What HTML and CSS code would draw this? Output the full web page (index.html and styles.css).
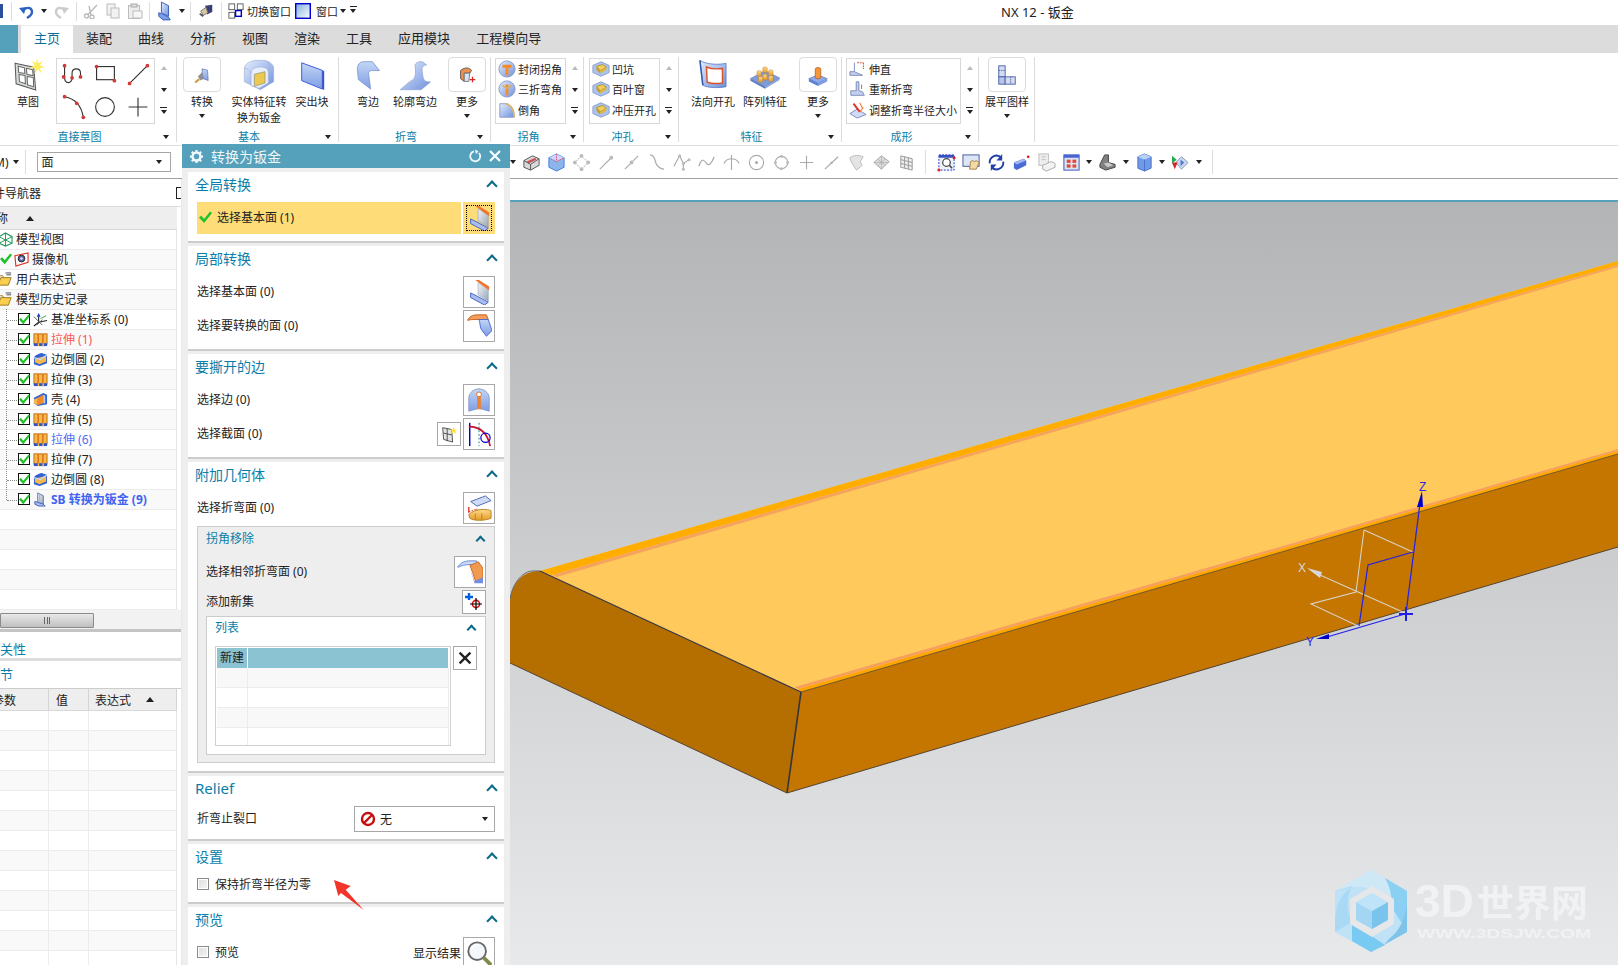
FILE: index.html
```html
<!DOCTYPE html>
<html lang="zh-CN">
<head>
<meta charset="utf-8">
<title>NX 12 - 钣金</title>
<link rel="stylesheet" href="styles.css">
</head>
<body>
<svg class="defs" xmlns="http://www.w3.org/2000/svg">
<defs>
<linearGradient id="gb" x1="0" y1="0" x2="1" y2="1"><stop offset="0" stop-color="#e4edfc"/><stop offset="1" stop-color="#6f90de"/></linearGradient>
<linearGradient id="gv" x1="0" y1="0" x2="0" y2="1"><stop offset="0" stop-color="#c2d6f6"/><stop offset="1" stop-color="#7e9de4"/></linearGradient>
<linearGradient id="gg" x1="0" y1="0" x2="1" y2="1"><stop offset="0" stop-color="#f4f6f8"/><stop offset="1" stop-color="#97a4b8"/></linearGradient>
<linearGradient id="go" x1="0" y1="0" x2="0" y2="1"><stop offset="0" stop-color="#ffd98a"/><stop offset="1" stop-color="#e59a28"/></linearGradient>
<symbol id="r-sketch" viewBox="0 0 32 32"><polygon points="3,5 21,9 23,31 4,25" fill="#d8dcd8" stroke="#5a5a5a"/><polygon points="6,8 12,9.5 12.5,15 6.5,14" fill="#fff" stroke="#666"/><polygon points="14,10 20,11.5 20.5,17 14.5,16" fill="#fff" stroke="#666"/><polygon points="6.8,16 12.6,17 13,25 7.2,23" fill="#fff" stroke="#666"/><polygon points="14.7,18 20.7,19 21,28 15,26" fill="#fff" stroke="#666"/><polygon points="24,0 25.5,5 30,3 27,7 32,9 27,10 29,15 25,11 22,15 22.5,10 17,10 22,7 19,3 23.5,5" fill="#ffec5a"/></symbol>
<symbol id="r-chain" viewBox="0 0 32 32"><path d="M7 6V18c0 8 8 8 8 1v-5c0-6 9-6 9 0v5" fill="none" stroke="#333" stroke-width="1.2"/><g fill="#d23a3a"><circle cx="7" cy="6" r="2"/><circle cx="6" cy="18" r="2"/><circle cx="15" cy="19" r="2"/><circle cx="24" cy="18" r="2"/></g></symbol>
<symbol id="r-rect" viewBox="0 0 32 32"><rect x="7" y="7" width="19" height="14" fill="none" stroke="#333" stroke-width="1.2"/><circle cx="7" cy="7" r="2" fill="#d23a3a"/><circle cx="26" cy="22" r="2" fill="#d23a3a"/></symbol>
<symbol id="r-line" viewBox="0 0 32 32"><path d="M7 25L26 6" stroke="#333" stroke-width="1.2"/><circle cx="7" cy="25" r="2" fill="#d23a3a"/><circle cx="26" cy="6" r="2" fill="#d23a3a"/></symbol>
<symbol id="r-arc" viewBox="0 0 32 32"><path d="M7 5C18 7 25 14 27 27" fill="none" stroke="#333" stroke-width="1.2"/><circle cx="7" cy="5" r="2" fill="#d23a3a"/><circle cx="20" cy="12" r="2" fill="#d23a3a"/><circle cx="27" cy="27" r="2" fill="#d23a3a"/></symbol>
<symbol id="r-circle" viewBox="0 0 32 32"><circle cx="16" cy="16" r="10" fill="none" stroke="#333" stroke-width="1.2"/></symbol>
<symbol id="r-plus" viewBox="0 0 32 32"><path d="M16 6V26M6 16H26" stroke="#333" stroke-width="1.2"/></symbol>
<symbol id="r-convert" viewBox="0 0 32 32"><polygon points="16,7 24,9 25,24 17,21" fill="url(#gv)" stroke="#5c6fae"/><polygon points="10,18 16,12 19,21 14,24" fill="#8f8f99"/><path d="M12 22L6 27" stroke="#cf9a3a" stroke-width="3"/></symbol>
<symbol id="r-solid" viewBox="0 0 48 48"><path d="M2 14C3 6 12 2 22 2H30C38 2 46 8 46 14V34L26 46 2 34Z" fill="url(#gb)" stroke="#9fb0d8"/><path d="M12 40V22C12 15 18 12 26 12 32 12 38 14 38 20V36L24 44Z" fill="#e8eefb" stroke="#9fb0d8"/><polygon points="17,23 33,19 33,36 17,41" fill="#ebc94f" stroke="#8c8c70"/><path d="M2 14C8 14 10 18 12 22M36 4C42 8 38 12 38 20" fill="none" stroke="#9fb0d8"/></symbol>
<symbol id="r-tab" viewBox="0 0 32 32"><polygon points="5,3 27,11 27,31 5,22" fill="url(#gv)" stroke="#3a55d8"/><polygon points="27,11 29,12 29,32 27,31" fill="#3550d0"/></symbol>
<symbol id="r-flange" viewBox="0 0 30 34"><path d="M3 10C3 6 5 2 10 2H20L28 12H19C16 12 15 14 16 18L18 33 4 22Z" fill="url(#gv)" stroke="#7f9ad0"/></symbol>
<symbol id="r-contour" viewBox="0 0 44 40"><path d="M16 28C22 26 24 20 22 8 22 4 28 2 32 3L37 7C33 7 31 9 31 13 33 24 31 29 42 29L30 39H3Z" fill="url(#gb)" stroke="#92a8d8"/></symbol>
<symbol id="r-morebend" viewBox="0 0 24 24"><path d="M5 7C10 3 15 4 17 7L15 10H9V19L5 16Z" fill="#ee9050" stroke="#555"/><path d="M9 10H15L14 19H9Z" fill="#d8e3f5" stroke="#777"/><path d="M15 17H21M18 14V20" stroke="#d22" stroke-width="1.4"/></symbol>
<symbol id="r-cor1" viewBox="0 0 20 20"><circle cx="10" cy="10" r="9" fill="url(#gb)" stroke="#8a9ac8"/><path d="M5 7H15M10 7V17" stroke="#f58c26" stroke-width="3.2"/></symbol>
<symbol id="r-cor2" viewBox="0 0 20 20"><circle cx="10" cy="10" r="9" fill="url(#gb)" stroke="#8a9ac8"/><path d="M10 5V17" stroke="#f58c26" stroke-width="3"/><path d="M5 6L10 9 15 6" fill="none" stroke="#d9b05c" stroke-width="1.6"/></symbol>
<symbol id="r-cor3" viewBox="0 0 20 20"><path d="M2 3H9C15 5 18 11 18 18H2Z" fill="url(#gb)" stroke="#8a9ac8"/><path d="M9 3C15 5 18 11 18 18" fill="none" stroke="#d8b46a" stroke-width="2"/></symbol>
<symbol id="r-punch" viewBox="0 0 20 20"><polygon points="10,2 19,6 19,14 10,18 1,14 1,6" fill="#a9c4ee" stroke="#8a9ac8"/><polygon points="5,7 12,5 16,8 9,12" fill="#f0cf5c" stroke="#b08e2c"/><polygon points="5,7 9,12 9,15 5,11" fill="#c99c2c"/><polygon points="9,12 16,8 16,11 9,15" fill="#e0b43f"/></symbol>
<symbol id="r-normal" viewBox="0 0 44 44"><path d="M4 2C14 8 30 8 40 6V38C30 40 14 40 8 36Z" fill="url(#gb)" stroke="#4a6fb8"/><path d="M4 2L8 36" stroke="#2f5aa8" stroke-width="2"/><path d="M13 11C20 14 28 14 35 13V33C28 34 20 34 14 32Z" fill="#fff" stroke="#d8552c" stroke-width="2"/></symbol>
<symbol id="r-pattern" viewBox="0 0 44 40"><polygon points="22,14 42,24 22,36 2,25" fill="#7f9bd8" stroke="#6a80b8"/><polygon points="2,25 22,36 22,39 2,28" fill="#5f7cc0"/><polygon points="22,36 42,24 42,27 22,39" fill="#8aa4e0"/><g fill="url(#go)" stroke="#bb7a20" stroke-width=".6"><rect x="11" y="14" width="6" height="8" rx="2"/><rect x="19" y="9" width="6" height="8" rx="2"/><rect x="27" y="13" width="6" height="8" rx="2"/><rect x="19" y="19" width="6" height="8" rx="2"/><rect x="27" y="21" width="6" height="8" rx="2"/><rect x="13" y="22" width="6" height="8" rx="2"/></g></symbol>
<symbol id="r-morefeat" viewBox="0 0 24 24"><polygon points="12,12 22,16 12,21 2,16" fill="#8cabe8" stroke="#6f86c0"/><polygon points="2,16 12,21 12,24 2,19" fill="#5a7fd6"/><polygon points="12,21 22,16 22,19 12,24" fill="#7d9de6"/><rect x="9" y="4" width="6" height="12" rx="2" fill="#f3963c" stroke="#c06a20"/></symbol>
<symbol id="r-f1" viewBox="0 0 20 20"><path d="M6 3V13H1V17H15L6 13" fill="#c4cff0" stroke="#7686b8"/><path d="M9 3H16M16 3V10" stroke="#d85030" stroke-width="1.2" stroke-dasharray="2 1"/></symbol>
<symbol id="r-f2" viewBox="0 0 20 20"><path d="M8 2V12H2V17H17L15 13 11 12V2Z" fill="#c4cff0" stroke="#7686b8"/><path d="M14 5V10" stroke="#d85030"/></symbol>
<symbol id="r-f3" viewBox="0 0 20 20"><polygon points="1,14 9,9 19,15 9,19" fill="#d0daf4" stroke="#7686b8"/><path d="M5 3L12 12" stroke="#e83030" stroke-width="2.2"/><path d="M12 2L15 8M16 7L12 12" stroke="#f08030" stroke-width="1.2"/></symbol>
<symbol id="r-flat" viewBox="0 0 24 24"><rect x="3" y="2" width="7" height="12" fill="#d4dcf0" stroke="#4a5eaa"/><rect x="3" y="14" width="7" height="8" fill="#b9c4e8" stroke="#4a5eaa"/><rect x="10" y="14" width="11" height="8" fill="#d4dcf0" stroke="#4a5eaa"/><path d="M3 7H10M16 14V22" stroke="#4a5eaa" stroke-dasharray="1.5 1"/></symbol>
<symbol id="d-base" viewBox="0 0 28 28"><polygon points="13,4 24,11 24,24 13,17" fill="url(#gg)" stroke="#8c9cb2" stroke-width=".6"/><polygon points="10,1 14,1 25,8 25,12" fill="#f4732a"/><polygon points="5,15 13,19 24,25 20,28 5,20" fill="#a9bdef" stroke="#3f5fc4"/></symbol>
<symbol id="d-face" viewBox="0 0 28 28"><path d="M2 7C5 3 8 2 12 2H22L24 7H11C7 7 4 7 2 8Z" fill="#f49e5c" stroke="#c45a20"/><path d="M14 7H24L28 19 22 25 16 17C15 13 15 10 14 7Z" fill="url(#gv)" stroke="#4a68d0"/></symbol>
<symbol id="d-edge" viewBox="0 0 28 28"><path d="M3 26V12C3 6 9 2 14 2S25 6 25 12V26L14 23Z" fill="url(#gv)" stroke="#8a9ac8"/><path d="M14 8V24" stroke="#f08030" stroke-width="4"/><circle cx="14" cy="8" r="2.6" fill="#fff" stroke="#e07020"/></symbol>
<symbol id="d-sect" viewBox="0 0 28 28"><path d="M4 2V27" stroke="#0000d0" stroke-width="1.6"/><path d="M3 6C14 6 23 12 26 27" fill="none" stroke="#c8102e" stroke-width="1.8"/><path d="M14 2V27" stroke="#108070" stroke-dasharray="2 2"/><circle cx="21" cy="18" r="5" fill="none" stroke="#0000d0" stroke-width="1.3"/></symbol>
<symbol id="d-sketch" viewBox="0 0 20 20"><polygon points="3,3 13,5 14,19 4,16" fill="#e4e4e4" stroke="#444"/><path d="M4 9L13 11M8 4V18" stroke="#444"/><polygon points="15,2 16,5 19,5 17,7 18,10 15,8 12,10 13,7 11,5 14,5" fill="#ffe040"/></symbol>
<symbol id="d-bend" viewBox="0 0 28 28"><polygon points="5,7 21,1 27,6 12,12" fill="#cfdaf4" stroke="#4a66b0"/><path d="M3 18L12 15 10 19 20 22" fill="none" stroke="#e05a20" stroke-dasharray="2 1"/><path d="M3 21C10 14 24 15 27 17V25C20 28 8 28 4 25Z" fill="url(#go)" stroke="#b8821e"/><path d="M10 20V27M17 20V27" stroke="#b8821e"/><path d="M3 13V19" stroke="#e03020" stroke-width="1.5"/></symbol>
<symbol id="d-adj" viewBox="0 0 28 28"><path d="M1 8C5 3 10 2 14 2H21L22 6H14C9 6 5 7 1 9Z" fill="#c8d8f5" stroke="#6a8ad0"/><path d="M14 7L23 3 28 10 28 20 20 24 17 15Z" fill="#f09a50" stroke="#c86a20"/><path d="M14 11L19 24 28 20 28 26 19 26Z" fill="#6f8ee8"/></symbol>
<symbol id="d-add" viewBox="0 0 20 20"><path d="M5 1V8M1 5H9" stroke="#0060e0" stroke-width="2.4"/><circle cx="12" cy="12" r="3.6" fill="none" stroke="#d81010" stroke-width="1.6"/><path d="M12 6V18M6 12H18" stroke="#000" stroke-width="1.2"/></symbol>
<symbol id="d-x" viewBox="0 0 20 20"><path d="M4 4L16 16M16 4L4 16" stroke="#222" stroke-width="2.6"/></symbol>
<symbol id="d-mag" viewBox="0 0 28 28"><circle cx="12" cy="12" r="9.5" fill="#f4f7fa" stroke="#666" stroke-width="2"/><path d="M6 9C8 6 11 5 14 5" stroke="#fff" stroke-width="2" fill="none"/><path d="M19 19L27 27" stroke="#7d8a4c" stroke-width="4"/></symbol>
<symbol id="d-no" viewBox="0 0 16 16"><circle cx="8" cy="8" r="6" fill="#fff" stroke="#c40f0f" stroke-width="2.4"/><path d="M4 12L12 4" stroke="#c40f0f" stroke-width="2.4"/></symbol>
<symbol id="d-gear" viewBox="0 0 16 16"><circle cx="8" cy="8" r="4.2" fill="none" stroke="#eef7fa" stroke-width="2.6"/><g stroke="#eef7fa" stroke-width="2.4"><path d="M8 1V3.4M8 12.6V15M1 8H3.4M12.6 8H15M3 3L4.8 4.8M11.2 11.2L13 13M13 3L11.2 4.8M4.8 11.2L3 13"/></g></symbol>
<symbol id="d-reset" viewBox="0 0 14 14"><path d="M6 2.4A5 5 0 1 0 11 4" fill="none" stroke="#eef7fa" stroke-width="1.8"/><path d="M7 .5L10.5 2.2 8 5.3Z" fill="#eef7fa"/></symbol>
<symbol id="d-close" viewBox="0 0 14 14"><path d="M2 2L12 12M12 2L2 12" stroke="#f4fafc" stroke-width="2.4"/></symbol>
<symbol id="check" viewBox="0 0 14 14"><path d="M0 7L2.5 5 5.5 8.5 12 0.5 14 2.2 5.5 13Z" fill="#1fc22c"/></symbol>
<symbol id="n-view" viewBox="0 0 16 16"><polygon points="8,1 15,5 15,12 8,15 1,12 1,5" fill="none" stroke="#1f9a5a" stroke-width="1.2"/><path d="M8 1V15M1 5L15 12M15 5L1 12" stroke="#1f9a5a"/></symbol>
<symbol id="n-cam" viewBox="0 0 16 16"><polygon points="1,4 15,1 15,11 2,15" fill="#fff" stroke="#e03020" stroke-width="1.2"/><circle cx="8" cy="7" r="3.6" fill="#6060a8" stroke="#222"/><circle cx="8" cy="7" r="1.4" fill="#d8e4ff"/></symbol>
<symbol id="n-folder" viewBox="0 0 16 16"><path d="M0 14L3 6H14L11 14Z" fill="#f8cf4f" stroke="#a07818"/><path d="M0 14V4H5L6 6" fill="none" stroke="#a07818"/><path d="M8 1H14M9 3H14" stroke="#334" stroke-width=".9"/></symbol>
<symbol id="n-csys" viewBox="0 0 16 16"><path d="M6 2V11L1 15M6 11L15 9" fill="none" stroke="#222" stroke-width="1.2"/><path d="M1 5L10 14M10 8L4 14" stroke="#555"/><path d="M6 1L4 5H8Z" fill="#2040d0"/><path d="M14 4L8 7" stroke="#2aa050"/></symbol>
<symbol id="n-ext" viewBox="0 0 16 16"><rect x="1" y="2" width="14" height="11" fill="#f7b84a" stroke="#c06a10"/><path d="M5.5 2V13M10.5 2V13" stroke="#d86a10" stroke-width="1.4"/><rect x="1" y="12" width="14" height="3" fill="#2d55c8"/><rect x="5" y="12" width="1.6" height="3" fill="#f7b84a"/><rect x="10" y="12" width="1.6" height="3" fill="#f7b84a"/></symbol>
<symbol id="n-blend" viewBox="0 0 16 16"><path d="M1 6C2 3 6 2 9 1L15 3V12L7 15 1 13Z" fill="#2f62d2"/><polygon points="2,7 10,5 14,4 14,10 7,13 2,11" fill="#f7b84a"/><path d="M1 6L8 8 15 3" fill="none" stroke="#c0d4fa" stroke-width="1.4"/></symbol>
<symbol id="n-shell" viewBox="0 0 16 16"><polygon points="1,6 11,1 15,3 15,13 5,15 1,12" fill="#2f62d2"/><polygon points="5,6 11,3 11,12 5,14" fill="#f08a2a"/><polygon points="1,8 5,6 5,14 1,12" fill="#f7b84a"/><polygon points="11,3 13,4 13,12 11,12" fill="#bcd0f4"/></symbol>
<symbol id="n-sb" viewBox="0 0 16 16"><polygon points="5,1 11,4 11,13 5,11" fill="url(#gg)" stroke="#5f78b4"/><polygon points="2,10 5,11 11,13 13,15 6,15 2,13" fill="#a9bdef" stroke="#3f5fc4"/><path d="M7 2V11" stroke="#a8b6d0"/></symbol>
<symbol id="q-save" viewBox="0 0 16 16"><rect x="1" y="1" width="14" height="14" fill="#2b4f9a"/><rect x="4" y="2" width="8" height="5" fill="#dfe7f5"/></symbol>
<symbol id="q-undo" viewBox="0 0 16 16"><path d="M4 9C5 4 13 3 13 9 13 12 11 13 8 15" fill="none" stroke="#2c62c4" stroke-width="2.4"/><path d="M0 5L7 4 5 11Z" fill="#2c62c4"/></symbol>
<symbol id="q-redo" viewBox="0 0 16 16"><path d="M12 9C11 4 3 3 3 9 3 12 5 13 8 15" fill="none" stroke="#ccc" stroke-width="2.4"/><path d="M16 5L9 4 11 11Z" fill="#ccc"/></symbol>
<symbol id="q-cut" viewBox="0 0 16 16"><g fill="none" stroke="#b8b8b8" stroke-width="1.3"><circle cx="3.5" cy="13" r="2"/><circle cx="9" cy="14" r="2"/><path d="M5 11.5L14 2M8 12L6 3"/></g></symbol>
<symbol id="q-copy" viewBox="0 0 16 16"><g fill="#f2f2f2" stroke="#bbb"><rect x="2" y="1" width="8" height="11"/><rect x="6" y="5" width="8" height="10"/></g></symbol>
<symbol id="q-paste" viewBox="0 0 16 16"><rect x="1.5" y="2.5" width="11" height="13" fill="#eee" stroke="#bbb"/><rect x="4" y="1" width="6" height="3" fill="#ddd" stroke="#aaa"/><rect x="6" y="8" width="9" height="7" fill="#f6f6f6" stroke="#bbb"/></symbol>
<symbol id="q-sb" viewBox="0 0 18 22"><polygon points="5,1 13,5 13,17 5,13" fill="url(#gb)" stroke="#2b55b8"/><polygon points="2,13 5,14 13,18 15,21 7,21 2,17" fill="#7d9fe8" stroke="#2b55b8"/></symbol>
<symbol id="q-brush" viewBox="0 0 18 18"><path d="M8 3L16 2 16 10 10 13Z" fill="#3a3f7a"/><path d="M3 9L9 5 11 11 6 14Z" fill="#d8c89a" stroke="#777"/><path d="M2 12L6 15" stroke="#555" stroke-width="2"/></symbol>
<symbol id="q-switch" viewBox="0 0 18 18"><g fill="#fff" stroke="#555"><rect x="1" y="1" width="6.5" height="6.5"/><rect x="10.5" y="1" width="6.5" height="6.5"/><rect x="1" y="10.5" width="6.5" height="6.5"/></g><rect x="8.5" y="8.5" width="6.5" height="6.5" fill="#fff" stroke="#0000d0" stroke-width="1.6"/></symbol>
<symbol id="q-win" viewBox="0 0 18 18"><linearGradient id="gwi" x1="0" y1="0" x2="1" y2="1"><stop offset="0" stop-color="#7fb0de"/><stop offset="1" stop-color="#fff"/></linearGradient><rect x=".8" y=".8" width="16.4" height="16.4" fill="url(#gwi)" stroke="#0000d0" stroke-width="1.6"/></symbol>
<symbol id="t-block" viewBox="0 0 20 20"><polygon points="2,8 11,3 18,6 18,13 9,18 2,15" fill="#d8d8d8" stroke="#555"/><path d="M5 9L14 5 15 7 7 11Z" fill="#d05050"/><path d="M2 8L9 12V18M9 12L18 6" fill="none" stroke="#555"/></symbol>
<symbol id="t-cube" viewBox="0 0 20 20"><polygon points="10,1 18,5 18,15 10,19 2,15 2,5" fill="#8db4ec" stroke="#3c80dc"/><polygon points="2,5 10,9 18,5 10,1" fill="#c8d8ff"/><path d="M10 1V9M2 5L10 9 18 5" fill="none" stroke="#e04060" stroke-dasharray="1.5 1"/></symbol>
<symbol id="t-move" viewBox="0 0 20 20"><g fill="none" stroke="#bbb" stroke-dasharray="1.5 1"><rect x="5" y="5" width="10" height="10" transform="rotate(45 10 10)"/></g><g fill="#bbb"><circle cx="10" cy="3" r="2"/><circle cx="10" cy="17" r="2"/><circle cx="3" cy="10" r="2"/><circle cx="17" cy="10" r="2"/></g></symbol>
<symbol id="t-line1" viewBox="0 0 20 20"><path d="M3 17L15 5" stroke="#aaa" stroke-width="1.2"/><circle cx="15" cy="5" r="2" fill="#bbb"/></symbol>
<symbol id="t-line2" viewBox="0 0 20 20"><path d="M3 17L17 3" stroke="#aaa" stroke-width="1.2"/><circle cx="10" cy="10" r="2" fill="#bbb"/></symbol>
<symbol id="t-s" viewBox="0 0 20 20"><path d="M3 2C9 2 8 9 10 12S14 17 18 17" fill="none" stroke="#aaa" stroke-width="1.3"/></symbol>
<symbol id="t-poly" viewBox="0 0 20 20"><path d="M2 14L8 3 12 11 18 7M12 11L12 17" fill="none" stroke="#aaa" stroke-width="1.2"/><g fill="#bbb"><circle cx="8" cy="3" r="1.6"/><circle cx="12" cy="11" r="1.6"/><circle cx="18" cy="7" r="1.6"/><circle cx="12" cy="17" r="1.6"/></g></symbol>
<symbol id="t-wave" viewBox="0 0 20 20"><path d="M2 14C5 4 8 8 10 11S15 12 18 4" fill="none" stroke="#aaa" stroke-width="1.3"/></symbol>
<symbol id="t-tree" viewBox="0 0 20 20"><path d="M10 2V18M2 11C4 7 7 6 10 6S16 7 18 11" fill="none" stroke="#aaa" stroke-width="1.2"/></symbol>
<symbol id="t-circ" viewBox="0 0 20 20"><circle cx="10" cy="10" r="7.5" fill="none" stroke="#aaa" stroke-width="1.2"/><circle cx="10" cy="10" r="1.6" fill="#aaa"/></symbol>
<symbol id="t-circ2" viewBox="0 0 20 20"><circle cx="10" cy="10" r="6.5" fill="none" stroke="#aaa" stroke-width="1.2"/><g fill="#bbb"><circle cx="10" cy="3.5" r="1.6"/><circle cx="3.5" cy="10" r="1.6"/><circle cx="16.5" cy="10" r="1.6"/><circle cx="10" cy="16.5" r="1.6"/></g></symbol>
<symbol id="t-plus" viewBox="0 0 20 20"><path d="M10 3V17M3 10H17" stroke="#aaa" stroke-width="1.2"/></symbol>
<symbol id="t-diag" viewBox="0 0 20 20"><path d="M3 17L17 4" stroke="#aaa" stroke-width="1.3"/><circle cx="10" cy="10.5" r="1.2" fill="#aaa"/></symbol>
<symbol id="t-surf" viewBox="0 0 20 20"><path d="M3 5C7 2 12 2 17 4L14 9 16 13 10 18C7 13 4 10 3 5Z" fill="#e4e4e4" stroke="#bbb"/></symbol>
<symbol id="t-mesh" viewBox="0 0 20 20"><polygon points="10,3 18,9 10,17 2,10" fill="#ddd" stroke="#aaa"/><path d="M6 6.5L14 13M14 6L6 13.5M10 3V17M2 10H18" stroke="#aaa" stroke-width=".7"/></symbol>
<symbol id="t-grid" viewBox="0 0 20 20"><polygon points="4,3 16,6 16,18 4,15" fill="#eee" stroke="#999"/><path d="M8 4V16M12 5V17M4 7L16 10M4 11L16 14" stroke="#999"/></symbol>
<symbol id="t-zoom" viewBox="0 0 20 20"><rect x="2" y="2" width="16" height="16" fill="#eef2f8" stroke="#1830c8" stroke-dasharray="2 1.4"/><rect x="2" y="2" width="16" height="3" fill="#3a50c0"/><circle cx="10" cy="10" r="4" fill="#fff" stroke="#444" stroke-width="1.3"/><path d="M13 13L16 16" stroke="#444" stroke-width="1.6"/><circle cx="2" cy="18" r="1.6" fill="#d22"/><circle cx="18" cy="5" r="1.6" fill="#d22"/></symbol>
<symbol id="t-hand" viewBox="0 0 20 20"><rect x="1" y="2" width="17" height="12" fill="#dde6f5" stroke="#465a98"/><path d="M9 9L8 17H15L18 10 15 8 13 9 11 8Z" fill="#f3d9a8" stroke="#a88248"/></symbol>
<symbol id="t-rot" viewBox="0 0 20 20"><path d="M3 11A7 7 0 0 1 15 5M17 9A7 7 0 0 1 5 15" fill="none" stroke="#2240a8" stroke-width="2"/><path d="M16 1V8H10Z" fill="#2240a8"/><path d="M4 19V12H10Z" fill="#2240a8"/></symbol>
<symbol id="t-arrow" viewBox="0 0 20 20"><polygon points="2,10 12,6 15,8 15,13 5,18 2,16" fill="#4a6ad8"/><polygon points="2,10 12,6 15,8 5,12" fill="#9fb6ef"/><circle cx="17" cy="4" r="1.4" fill="#d22"/></symbol>
<symbol id="t-layers" viewBox="0 0 20 20"><rect x="2" y="1" width="10" height="12" fill="#eee" stroke="#bbb"/><polygon points="6,13 15,9 19,11 19,15 10,19 6,17" fill="#f2f2f2" stroke="#aaa"/><path d="M5 4H9M5 7H9" stroke="#bbb"/></symbol>
<symbol id="t-win" viewBox="0 0 20 20"><rect x="2" y="2" width="16" height="16" fill="#dbe4f5" stroke="#3a50b8"/><rect x="2" y="2" width="16" height="3" fill="#4a64d0"/><g fill="#e84830"><rect x="5" y="7" width="4" height="3.4"/><rect x="11" y="7" width="4" height="3.4"/><rect x="5" y="12" width="4" height="3.4"/><rect x="11" y="12" width="4" height="3.4"/></g></symbol>
<symbol id="t-shade" viewBox="0 0 20 20"><polygon points="7,2 11,2 11,10 18,12 18,15 8,18 2,15 2,12" fill="#808080" stroke="#444"/><polygon points="6,11 11,10 16,13 10,15" fill="#c8c8c8"/></symbol>
<symbol id="t-cube2" viewBox="0 0 20 20"><polygon points="10,1 17,4 17,16 10,19 3,16 3,4" fill="#6f9ae8" stroke="#4a72c8"/><polygon points="3,4 10,7 17,4 10,1" fill="#b9d0f6"/><path d="M10 7V19" stroke="#4a72c8"/></symbol>
<symbol id="t-filter" viewBox="0 0 20 20"><polygon points="11,4 18,10 11,17 5,10" fill="#c8d8f0" stroke="#8a98b8"/><polygon points="10,7 14,10 10,14" fill="#5a78c8"/><polygon points="1,3 6,7 1,11" fill="#28a850"/><polygon points="1,10 7,10 4,17" fill="#d02828"/></symbol>
</defs>
</svg>

<div class="app">
  <header class="titlebar">
    <div class="qat">
      <svg class="qi q-first"><use href="#q-save"/></svg><i class="qsep"></i>
      <span class="qc qc-w"><svg class="qi"><use href="#q-undo"/></svg></span><span class="qa"><i class="tri"></i></span>
      <span class="qc qc-w"><svg class="qi"><use href="#q-redo"/></svg></span><i class="qsep"></i>
      <span class="qc"><svg class="qi"><use href="#q-cut"/></svg></span>
      <span class="qc"><svg class="qi"><use href="#q-copy"/></svg></span>
      <span class="qc"><svg class="qi"><use href="#q-paste"/></svg></span><i class="qsep"></i>
      <span class="qc qc-w"><svg class="qi qi-tall"><use href="#q-sb"/></svg></span><span class="qa"><i class="tri"></i></span><i class="qsep"></i>
      <span class="qc qc-w"><svg class="qi"><use href="#q-brush"/></svg></span><i class="qsep"></i>
      <span class="qc"><svg class="qi"><use href="#q-switch"/></svg></span><span class="qtext">切换窗口</span>
      <span class="qc qc-g"><svg class="qi"><use href="#q-win"/></svg></span><span class="qtext">窗口</span>
      <span class="qa"><i class="tri"></i></span><span class="qa"><i class="tri tri-more"></i></span>
    </div>
    <div class="apptitle">NX 12 - 钣金</div>
  </header>

  <nav class="tabs">
    <span class="tab-file"></span>
    <span class="tab tab-on">主页</span><span class="tab">装配</span><span class="tab">曲线</span><span class="tab">分析</span><span class="tab">视图</span><span class="tab">渲染</span><span class="tab">工具</span><span class="tab">应用模块</span><span class="tab">工程模向导</span>
  </nav>

  <section class="ribbon">
    <div class="group g1">
      <div class="gbody">
        <div class="item w56"><div class="item-icon"><svg class="ri ri-xl"><use href="#r-sketch"/></svg></div><span class="lbl">草图</span></div>
        <div class="gallery icons">
          <span><svg class="gi"><use href="#r-chain"/></svg></span><span><svg class="gi"><use href="#r-rect"/></svg></span><span><svg class="gi"><use href="#r-line"/></svg></span>
          <span><svg class="gi"><use href="#r-arc"/></svg></span><span><svg class="gi"><use href="#r-circle"/></svg></span><span><svg class="gi"><use href="#r-plus"/></svg></span>
        </div>
        <div class="scroll"><i class="tri tri-up"></i><i class="tri"></i><i class="tri tri-more"></i></div>
      </div>
      <div class="gfoot"><span>直接草图</span><i class="tri"></i></div>
    </div>
    <div class="group g2">
      <div class="gbody">
        <div class="item w42"><div class="item-icon boxed"><svg class="ri ri-s"><use href="#r-convert"/></svg></div><span class="lbl">转换</span><i class="tri drop"></i></div>
        <div class="item w72"><div class="item-icon"><svg class="ri ri-l"><use href="#r-solid"/></svg></div><span class="lbl">实体特征转<br>换为钣金</span></div>
        <div class="item w34"><div class="item-icon"><svg class="ri"><use href="#r-tab"/></svg></div><span class="lbl">突出块</span></div>
      </div>
      <div class="gfoot"><span>基本</span><i class="tri"></i></div>
    </div>
    <div class="group g3">
      <div class="gbody">
        <div class="item w40"><div class="item-icon"><svg class="ri"><use href="#r-flange"/></svg></div><span class="lbl">弯边</span></div>
        <div class="item w54"><div class="item-icon"><svg class="ri ri-w"><use href="#r-contour"/></svg></div><span class="lbl">轮廓弯边</span></div>
        <div class="item w44 ml3"><div class="item-icon boxed"><svg class="ri ri-s"><use href="#r-morebend"/></svg></div><span class="lbl">更多</span><i class="tri drop"></i></div>
      </div>
      <div class="gfoot"><span>折弯</span><i class="tri"></i></div>
    </div>
    <div class="group g4">
      <div class="gbody">
        <div class="gallery rows">
          <div><svg class="gl"><use href="#r-cor1"/></svg>封闭拐角</div>
          <div><svg class="gl"><use href="#r-cor2"/></svg>三折弯角</div>
          <div><svg class="gl"><use href="#r-cor3"/></svg>倒角</div>
        </div>
        <div class="scroll"><i class="tri tri-up"></i><i class="tri"></i><i class="tri tri-more"></i></div>
      </div>
      <div class="gfoot"><span>拐角</span><i class="tri"></i></div>
    </div>
    <div class="group g5">
      <div class="gbody">
        <div class="gallery rows">
          <div><svg class="gl"><use href="#r-punch"/></svg>凹坑</div>
          <div><svg class="gl"><use href="#r-punch"/></svg>百叶窗</div>
          <div><svg class="gl"><use href="#r-punch"/></svg>冲压开孔</div>
        </div>
        <div class="scroll"><i class="tri tri-up"></i><i class="tri"></i><i class="tri tri-more"></i></div>
      </div>
      <div class="gfoot"><span>冲孔</span><i class="tri"></i></div>
    </div>
    <div class="group g6">
      <div class="gbody">
        <div class="item w52"><div class="item-icon"><svg class="ri ri-l"><use href="#r-normal"/></svg></div><span class="lbl">法向开孔</span></div>
        <div class="item w52"><div class="item-icon"><svg class="ri ri-l"><use href="#r-pattern"/></svg></div><span class="lbl">阵列特征</span></div>
        <div class="item w44 ml5"><div class="item-icon boxed"><svg class="ri ri-s"><use href="#r-morefeat"/></svg></div><span class="lbl">更多</span><i class="tri drop"></i></div>
      </div>
      <div class="gfoot"><span>特征</span><i class="tri"></i></div>
    </div>
    <div class="group g7">
      <div class="gbody">
        <div class="gallery rows">
          <div><svg class="gl"><use href="#r-f1"/></svg>伸直</div>
          <div><svg class="gl"><use href="#r-f2"/></svg>重新折弯</div>
          <div><svg class="gl"><use href="#r-f3"/></svg>调整折弯半径大小</div>
        </div>
        <div class="scroll"><i class="tri tri-up"></i><i class="tri"></i><i class="tri tri-more"></i></div>
      </div>
      <div class="gfoot"><span>成形</span><i class="tri"></i></div>
    </div>
    <div class="group g8">
      <div class="gbody">
        <div class="item w44"><div class="item-icon boxed"><svg class="ri ri-s"><use href="#r-flat"/></svg></div><span class="lbl">展平图样</span><i class="tri drop"></i></div>
      </div>
    </div>
  </section>

  <section class="toolbar">
    <div class="tb-left">
      <span class="tb-cut">M)</span><i class="tri tb-tri"></i><i class="tb-sep tb-sep-l"></i>
      <div class="select tb-sel">面<i class="tri"></i></div>
    </div>
    <span class="tba"><i class="tri"></i></span>
    <span class="tc"><svg class="ti"><use href="#t-block"/></svg></span>
    <span class="tc"><svg class="ti"><use href="#t-cube"/></svg></span>
    <span class="tc"><svg class="ti"><use href="#t-move"/></svg></span>
    <span class="tc"><svg class="ti"><use href="#t-line1"/></svg></span>
    <span class="tc"><svg class="ti"><use href="#t-line2"/></svg></span>
    <span class="tc"><svg class="ti"><use href="#t-s"/></svg></span>
    <span class="tc"><svg class="ti"><use href="#t-poly"/></svg></span>
    <span class="tc"><svg class="ti"><use href="#t-wave"/></svg></span>
    <span class="tc"><svg class="ti"><use href="#t-tree"/></svg></span>
    <span class="tc"><svg class="ti"><use href="#t-circ"/></svg></span>
    <span class="tc"><svg class="ti"><use href="#t-circ2"/></svg></span>
    <span class="tc"><svg class="ti"><use href="#t-plus"/></svg></span>
    <span class="tc"><svg class="ti"><use href="#t-diag"/></svg></span>
    <span class="tc"><svg class="ti"><use href="#t-surf"/></svg></span>
    <span class="tc"><svg class="ti"><use href="#t-mesh"/></svg></span>
    <span class="tc"><svg class="ti"><use href="#t-grid"/></svg></span>
    <i class="tb-sep"></i>
    <span class="tc"><svg class="ti"><use href="#t-zoom"/></svg></span>
    <span class="tc"><svg class="ti"><use href="#t-hand"/></svg></span>
    <span class="tc"><svg class="ti"><use href="#t-rot"/></svg></span>
    <span class="tc"><svg class="ti"><use href="#t-arrow"/></svg></span>
    <span class="tc"><svg class="ti"><use href="#t-layers"/></svg></span>
    <span class="tc"><svg class="ti"><use href="#t-win"/></svg></span><span class="tbd"><i class="tri"></i></span>
    <span class="tc"><svg class="ti"><use href="#t-shade"/></svg></span><span class="tbd"><i class="tri"></i></span>
    <span class="tc"><svg class="ti"><use href="#t-cube2"/></svg></span><span class="tbd"><i class="tri"></i></span>
    <span class="tc"><svg class="ti"><use href="#t-filter"/></svg></span><span class="tbd"><i class="tri"></i></span>
    <i class="tb-sep tb-sep-end"></i>
  </section>

  <main class="main">
    <aside class="nav">
      <div class="nav-head"><span class="clip-19">部件导航器</span><i class="nav-pin"></i></div>
      <div class="nav-col"><span class="clip-16">名称</span><i class="tri tri-sort"></i></div>
      <div class="tree">
        <div class="row"><svg class="tn tn-clip"><use href="#n-view"/></svg>模型视图</div>
        <div class="row"><svg class="tck"><use href="#check"/></svg><svg class="tn"><use href="#n-cam"/></svg>摄像机</div>
        <div class="row"><svg class="tn tn-clip"><use href="#n-folder"/></svg>用户表达式</div>
        <div class="row"><svg class="tn tn-clip"><use href="#n-folder"/></svg>模型历史记录</div>
        <div class="row child"><b class="cb"><svg><use href="#check"/></svg></b><svg class="tn"><use href="#n-csys"/></svg>基准坐标系 (0)</div>
        <div class="row child red"><b class="cb"><svg><use href="#check"/></svg></b><svg class="tn"><use href="#n-ext"/></svg>拉伸 (1)</div>
        <div class="row child"><b class="cb"><svg><use href="#check"/></svg></b><svg class="tn"><use href="#n-blend"/></svg>边倒圆 (2)</div>
        <div class="row child"><b class="cb"><svg><use href="#check"/></svg></b><svg class="tn"><use href="#n-ext"/></svg>拉伸 (3)</div>
        <div class="row child"><b class="cb"><svg><use href="#check"/></svg></b><svg class="tn"><use href="#n-shell"/></svg>壳 (4)</div>
        <div class="row child"><b class="cb"><svg><use href="#check"/></svg></b><svg class="tn"><use href="#n-ext"/></svg>拉伸 (5)</div>
        <div class="row child blue"><b class="cb"><svg><use href="#check"/></svg></b><svg class="tn"><use href="#n-ext"/></svg>拉伸 (6)</div>
        <div class="row child"><b class="cb"><svg><use href="#check"/></svg></b><svg class="tn"><use href="#n-ext"/></svg>拉伸 (7)</div>
        <div class="row child"><b class="cb"><svg><use href="#check"/></svg></b><svg class="tn"><use href="#n-blend"/></svg>边倒圆 (8)</div>
        <div class="row child last cur"><b class="cb"><svg><use href="#check"/></svg></b><svg class="tn"><use href="#n-sb"/></svg>SB 转换为钣金 (9)</div>
        <div class="row"></div><div class="row"></div><div class="row"></div><div class="row"></div><div class="row"></div>
      </div>
      <div class="nav-scroll"><span class="thumb"><i></i></span></div>
      <div class="panel-head"><span class="clip-13">相关性</span></div>
      <div class="panel-head panel-head-2"><span class="clip-13">细节</span></div>
      <div class="grid-head"><span class="gc1"><span class="clip-8">参数</span></span><span class="gc2">值</span><span class="gc3">表达式<i class="tri tri-sort2"></i></span></div>
      <div class="grid-body">
        <div class="grow"><i></i><i></i><i></i></div><div class="grow"><i></i><i></i><i></i></div><div class="grow"><i></i><i></i><i></i></div><div class="grow"><i></i><i></i><i></i></div><div class="grow"><i></i><i></i><i></i></div><div class="grow"><i></i><i></i><i></i></div><div class="grow"><i></i><i></i><i></i></div><div class="grow"><i></i><i></i><i></i></div><div class="grow"><i></i><i></i><i></i></div><div class="grow"><i></i><i></i><i></i></div><div class="grow"><i></i><i></i><i></i></div><div class="grow"><i></i><i></i><i></i></div><div class="grow"><i></i><i></i><i></i></div>
      </div>
    </aside>
    <div class="work">
      <div class="work-top"></div>
      <div class="viewport">
        <svg class="scene" viewBox="182 202 1436 763" xmlns="http://www.w3.org/2000/svg">
          <polygon points="540,571 1618,261 1618,454 801,692" fill="#ffc95c"/>
          <polygon points="540,571 1618,261 1618,265 552,575" fill="#ffae00"/>
          <polygon points="552,575 1618,265 1618,267 557,577" fill="#f5a45e"/>
          <polygon points="798,689 1618,451 1618,454 801,692" fill="#ffa600"/>
          <polygon points="795,687 1618,449 1618,451 798,689" fill="#f6a060"/>
          <polygon points="801,692 1618,454 1618,547 787,793" fill="#c47600"/>
          <path d="M510 599C513 581 524 571 540 571L801 692 787 793 510 663Z" fill="#b56e00"/>
          <path d="M510 599C513 581 524 571 533 571H540" fill="none" stroke="#666" stroke-width="1"/>
          <path d="M540 571L801 692" fill="none" stroke="#3a3a44" stroke-width="1.3"/>
          <path d="M801 692L787 793" fill="none" stroke="#33333a" stroke-width="1.6"/>
          <path d="M510 663L787 793 1618 547" fill="none" stroke="#554433" stroke-width="1"/>
          <path d="M801 692L1618 454" fill="none" stroke="#5a4a30" stroke-width=".8"/>
          <g fill="none" stroke="#d9d1c4" stroke-width="1.1">
            <path d="M1364 530L1413 552M1364 530L1356 592 1311 604 1358 626"/>
            <path d="M1405 613L1320 575"/>
          </g>
          <polygon points="1307,568 1322,572 1320,578" fill="#d8d8d8"/>
          <g fill="none" stroke="#2020e6" stroke-width="1.2">
            <path d="M1406 613L1420 503M1413 552L1368 565 1359 626M1405 614L1327 637"/>
            <path d="M1399 614H1413M1406 607V621" stroke-width="2"/>
          </g>
          <polygon points="1422,491 1417,507 1423,507" fill="#0000c8"/>
          <polygon points="1316,639 1329,634 1329,639" fill="#0000c8"/>
          <text x="1419" y="491" class="axis axis-b">Z</text>
          <text x="1298" y="572" class="axis axis-w">X</text>
          <text x="1306" y="646" class="axis axis-b">Y</text>

          <g>
            <polygon points="1371,870 1407,891 1407,932 1371,952 1335,932 1335,891" fill="#bfe2f6"/>
            <path d="M1371 870L1335 891 1352 887C1368 884 1384 893 1391 907 1392 895 1390 884 1384 878Z" fill="#cfe8f6"/>
            <path d="M1385 878L1407 891V932L1393 909C1392 898 1390 886 1385 878Z" fill="#8bd0f2"/>
            <path d="M1407 905V932L1384 945 1390 938C1398 932 1405 920 1407 905Z" fill="#7fc3ea"/>
            <path d="M1352 923L1385 945 1371 952 1352 941Z" fill="#78caf3"/>
            <path d="M1335 891L1352 886C1346 898 1346 910 1352 922L1335 932Z" fill="#a9d9f4"/>
            <path d="M1335 891L1352 887C1340 895 1336 905 1335 922Z" fill="#bde1f6"/>
            <polygon points="1372,886 1394,899 1394,924 1372,937 1350,924 1350,899" fill="#e6e7e9"/>
            <polygon points="1372,893 1388,902 1372,911 1356,902" fill="#bfe3f8"/>
            <polygon points="1356,902 1372,911 1372,929 1356,920" fill="#a4d6f3"/>
            <polygon points="1388,902 1372,911 1372,929 1388,920" fill="#79c4ec"/>
          </g>
          <text x="1415" y="917" class="wm-a"><tspan class="wm-l">3D</tspan><tspan dx="3">世界网</tspan></text>
          <text x="1417" y="938" class="wm-b" textLength="174" lengthAdjust="spacingAndGlyphs">WWW.3DSJW.COM</text>
        </svg>
      </div>
    </div>
  </main>

  <aside class="dialog">
    <div class="dlg-title"><svg class="dlg-gear"><use href="#d-gear"/></svg><span class="dlg-name">转换为钣金</span><svg class="dlg-act"><use href="#d-reset"/></svg><svg class="dlg-act dlg-close"><use href="#d-close"/></svg></div>
    <div class="dlg-body">
      <section class="sec">
        <h3 class="sec-h">全局转换<i class="chev"></i></h3>
        <div class="frow">
          <div class="sel-on"><svg class="sel-check"><use href="#check"/></svg>选择基本面 (1)</div>
          <button class="btn btn-on"><svg><use href="#d-base"/></svg></button>
        </div>
      </section>
      <section class="sec">
        <h3 class="sec-h">局部转换<i class="chev"></i></h3>
        <div class="frow frow-sb"><span>选择基本面 (0)</span><button class="btn"><svg><use href="#d-base"/></svg></button></div>
        <div class="frow frow-sb frow-2"><span>选择要转换的面 (0)</span><button class="btn"><svg><use href="#d-face"/></svg></button></div>
      </section>
      <section class="sec">
        <h3 class="sec-h">要撕开的边<i class="chev"></i></h3>
        <div class="frow frow-sb"><span>选择边 (0)</span><button class="btn"><svg><use href="#d-edge"/></svg></button></div>
        <div class="frow frow-sb frow-2"><span>选择截面 (0)</span><span class="btns"><button class="btn btn-s"><svg><use href="#d-sketch"/></svg></button><button class="btn"><svg><use href="#d-sect"/></svg></button></span></div>
      </section>
      <section class="sec sec-4">
        <h3 class="sec-h">附加几何体<i class="chev"></i></h3>
        <div class="frow frow-sb"><span>选择折弯面 (0)</span><button class="btn"><svg><use href="#d-bend"/></svg></button></div>
        <div class="sub">
          <h4 class="sub-h">拐角移除<i class="chev chev-s"></i></h4>
          <div class="sub-row"><span>选择相邻折弯面 (0)</span><button class="btn"><svg><use href="#d-adj"/></svg></button></div>
          <div class="sub-row sub-row-2"><span>添加新集</span><button class="btn btn-24"><svg><use href="#d-add"/></svg></button></div>
          <div class="listbox">
            <h4 class="list-h">列表<i class="chev chev-s"></i></h4>
            <div class="list-wrap">
              <div class="ltable">
                <div class="lrow lrow-head"><span>新建</span><span></span></div>
                <div class="lrow"><span></span><span></span></div>
                <div class="lrow"><span></span><span></span></div>
                <div class="lrow"><span></span><span></span></div>
                <div class="lrow"><span></span><span></span></div>
              </div>
              <button class="btn btn-24 btn-x"><svg><use href="#d-x"/></svg></button>
            </div>
          </div>
        </div>
      </section>
      <section class="sec">
        <h3 class="sec-h sec-h-en">Relief<i class="chev"></i></h3>
        <div class="frow frow-sb frow-sel"><span>折弯止裂口</span><div class="select dlg-sel"><svg class="no"><use href="#d-no"/></svg>无<i class="tri"></i></div></div>
      </section>
      <section class="sec">
        <h3 class="sec-h">设置<i class="chev"></i></h3>
        <label class="chk-row"><i class="chk"></i>保持折弯半径为零</label>
      </section>
      <section class="sec">
        <h3 class="sec-h">预览<i class="chev"></i></h3>
        <div class="frow frow-sb"><span class="prev"><i class="chk"></i>预览</span><span class="btns"><span class="res">显示结果</span><button class="btn"><svg><use href="#d-mag"/></svg></button></span></div>
      </section>
    </div>
  </aside>

  <svg class="red-arrow" viewBox="330 876 36 36" xmlns="http://www.w3.org/2000/svg"><polygon points="334,880 350.7,886 345.7,889.8 363.7,910 341,893 338.3,896" fill="#f1352b"/></svg>
</div>
</body>
</html>
```
FILE: styles.css
```css
* { box-sizing: border-box; }
html, body { margin: 0; padding: 0; height: 965px; overflow: hidden; background: #fff; }
body, button { font-family: "Noto Sans", "Noto Sans CJK SC", sans-serif; font-size: 12px; color: #222; }
.defs { position: absolute; width: 0; height: 0; }
i { display: block; font-style: normal; }
h3, h4 { margin: 0; font-weight: 400; }

.app { position: relative; width: 1618px; height: 965px; display: flex; flex-direction: column; overflow: hidden; }

.tri { width: 0; height: 0; border-left: 3.5px solid transparent; border-right: 3.5px solid transparent; border-top: 4px solid #222; flex: none; }
.tri-up { border-top: 0; border-bottom: 4px solid #bbb; }
.tri-more { position: relative; }
.tri-more::before { content: ""; position: absolute; left: -3.5px; top: -7px; width: 7px; height: 1px; background: #222; }

/* title bar */
.titlebar { height: 25px; flex: none; display: flex; align-items: center; background: #fff; padding-bottom: 3px; }
.qat { width: 1001px; flex: none; display: flex; align-items: center; overflow: hidden; height: 22px; }
.qi { width: 16px; height: 16px; display: block; }
.qi-tall { height: 20px; }
.q-first { margin-left: -12px; width: 16px; margin-right: 4px; flex: none; }
.qsep { width: 1px; height: 19px; background: #ddd; margin: 0 3px; flex: none; }
.qc { width: 22px; display: flex; justify-content: center; flex: none; }
.qc-w { width: 24px; }
.qc-g { margin-left: 1px; margin-right: 2px; }
.qa { width: 10px; display: flex; justify-content: center; flex: none; }
.qtext { font-size: 11px; white-space: nowrap; flex: none; }
.apptitle { font-size: 13px; color: #222; white-space: nowrap; }

/* tabs */
.tabs { height: 28px; flex: none; display: flex; background: #dcdcdc; align-items: stretch; }
.tab-file { width: 18px; background: #55a0ba; margin-right: 3px; flex: none; }
.tab { padding: 0 13px; font-size: 13px; line-height: 27px; white-space: nowrap; }
.tab-on { background: #fff; color: #0a6f9a; border-top: 1px solid #ececec; line-height: 25px; }

/* ribbon */
.ribbon { height: 93px; flex: none; display: flex; padding-top: 4px; background: #fff; border-bottom: 1px solid #dfdfdf; }
.group { height: 85px; flex: none; display: flex; flex-direction: column; border-right: 1px solid #dcdcdc; }
.g1 { width: 177px; } .g2 { width: 162px; padding-left: 4px; } .g3 { width: 152px; padding-left: 9px; }
.g4 { width: 93px; padding-left: 4px; } .g5 { width: 95px; padding-left: 5px; } .g6 { width: 163px; padding-left: 8px; }
.g7 { width: 137px; padding-left: 4px; } .g8 { width: 56px; padding-left: 6px; }
.gbody { height: 70px; flex: none; display: flex; align-items: flex-start; }
.gfoot { display: flex; align-items: center; height: 15px; padding-top: 4px; overflow: visible; }
.g2 .gfoot { margin-left: -4px; } .g3 .gfoot { margin-left: -9px; } .g4 .gfoot { margin-left: -4px; }
.g5 .gfoot { margin-left: -5px; } .g6 .gfoot { margin-left: -8px; } .g7 .gfoot { margin-left: -4px; }
.gfoot span { flex: 1; text-align: center; font-size: 11px; line-height: 15px; color: #0a7ea8; }
.gfoot .tri { margin: 0 7px 0 4px; }

.item { flex: none; display: flex; flex-direction: column; align-items: center; }
.item-icon { height: 35px; width: 100%; display: flex; align-items: center; justify-content: center; }
.boxed { width: 38px; border: 1px solid #dcdcdc; border-radius: 4px; }
.lbl { font-size: 11px; line-height: 16px; text-align: center; white-space: nowrap; margin-top: 2px; }
.drop { margin-top: 4px; }
.w34 { width: 34px; } .w40 { width: 40px; } .w42 { width: 42px; } .w44 { width: 44px; }
.w52 { width: 52px; } .w54 { width: 54px; } .w56 { width: 56px; } .w72 { width: 72px; }
.ml3 { margin-left: 3px; } .ml5 { margin-left: 5px; }
.ri { width: 30px; height: 30px; display: block; }
.ri-xl { width: 33px; height: 33px; }
.ri-l { width: 32px; height: 32px; }
.ri-w { width: 34px; height: 32px; }
.ri-s { width: 22px; height: 22px; }

.gallery { margin-top: 1px; height: 66px; flex: none; border: 1px solid #d8d8d8; }
.icons { width: 99px; display: grid; grid-template-columns: repeat(3, 1fr); grid-template-rows: repeat(2, 1fr); }
.icons span { display: flex; align-items: center; justify-content: center; }
.gi { width: 30px; height: 30px; }
.rows { display: grid; grid-template-rows: repeat(3, 1fr); padding: 0 0 3px 2px; }
.rows div { display: flex; align-items: center; font-size: 11px; white-space: nowrap; padding-right: 2px; }
.gl { width: 18px; height: 18px; margin-right: 2px; flex: none; }
.g4 .rows { width: 71px; } .g5 .rows { width: 71px; } .g7 .rows { width: 115px; }
.scroll { flex: none; width: 17px; height: 66px; display: grid; grid-template-rows: repeat(3, 1fr); align-items: center; justify-items: center; }

/* second toolbar */
.toolbar { height: 33px; flex: none; display: flex; align-items: center; background: #fff; border-bottom: 1px solid #9ea2a6; }
.tb-left { width: 508px; flex: none; display: flex; align-items: center; overflow: hidden; }
.tb-cut { margin-left: -6px; font-size: 12px; white-space: nowrap; }
.tb-tri { margin-left: 5px; }
.tb-sep { width: 1px; height: 24px; background: #ddd; margin: 0 7.5px 0 6.5px; flex: none; }
.tb-sep-l { margin: 0 11px 0 6px; }
.tb-sep-end { margin-left: 7.5px; }
.select { display: flex; align-items: center; background: #fff; border: 1px solid #a6a6a6; }
.select .tri { margin-left: auto; }
.tb-sel { width: 134px; height: 20px; padding: 0 8px 0 3px; flex: none; }
.tba { width: 10.7px; display: flex; justify-content: center; flex: none; }
.tc { width: 25px; display: flex; justify-content: center; flex: none; }
.ti { width: 19px; height: 19px; display: block; }
.tbd { width: 11.5px; display: flex; justify-content: center; flex: none; }

/* main */
.main { flex: 1; min-height: 0; display: flex; }
.nav { width: 182px; flex: none; display: flex; flex-direction: column; border-right: 1px solid #e8e8e8; overflow: hidden; background: #fff; }
.nav-head { height: 28px; flex: none; display: flex; align-items: center; border-bottom: 1px solid #dcdcdc; overflow: hidden; white-space: nowrap; }
.clip-19 { margin-left: -19px; }
.clip-16 { margin-left: -16px; }
.clip-13 { margin-left: -13px; }
.clip-8 { margin-left: -8px; }
.nav-pin { margin-left: auto; width: 5px; height: 12px; border: 1px solid #222; border-right: 0; }
.nav-col { height: 23px; width: 177px; flex: none; display: flex; align-items: center; background: #eee; border-bottom: 1px solid #d8d8d8; white-space: nowrap; }
.tri-sort { margin-left: 18px; border-left-width: 4.5px; border-right-width: 4.5px; border-top: 0; border-bottom: 5px solid #222; }
.tree { height: 380px; flex: none; width: 177px; border-right: 1px solid #e4e4e4; overflow: hidden; }
.row { position: relative; height: 20px; display: flex; align-items: center; padding: 0 0 1px; border-bottom: 1px solid #ececec; white-space: nowrap; overflow: visible; }
.row:nth-child(even) { background: #f9f9f9; }
.tn { width: 15px; height: 15px; margin-right: 3px; flex: none; }
.tn-clip { margin-left: -2px; }
.tck { width: 12px; height: 12px; margin-right: 2px; flex: none; }
.child { padding-left: 18px; }
.child::before { content: ""; position: absolute; left: 6px; top: -1px; bottom: -1px; border-left: 1px dotted #888; }
.child::after { content: ""; position: absolute; left: 7px; top: 50%; width: 10px; border-top: 1px dotted #888; }
.last::before { bottom: 50%; }
.cb { width: 12px; height: 12px; border: 1px solid #111; background: #fff; margin-right: 3px; flex: none; display: block; }
.cb svg { width: 11px; height: 11px; display: block; }
.red { color: #ff5454; }
.blue { color: #4f6cf0; }
.cur { color: #3f62f2; font-weight: 700; }
.nav-scroll { height: 22px; flex: none; padding-top: 3px; background: #f2f2f2; border-bottom: 3px solid #c4c4c4; }
.thumb { display: flex; justify-content: center; width: 94px; height: 15px; background: linear-gradient(#e8e8e8, #c0c0c0); border: 1px solid #8a8a8a; border-radius: 1px; align-items: center; }
.thumb i { width: 7px; height: 7px; background: repeating-linear-gradient(90deg, #666 0 1px, transparent 1px 2.5px); }
.panel-head { height: 29px; padding-top: 7px; flex: none; display: flex; align-items: center; font-size: 13px; color: #0a7ea8; white-space: nowrap; border-bottom: 3px solid #ddd; }
.panel-head-2 { height: 28px; padding: 0 0 2px; border-bottom: 1px solid #ccc; }
.grid-head { height: 22px; flex: none; display: flex; background: #eee; border-bottom: 1px solid #d8d8d8; white-space: nowrap; width: 177px; }
.grid-head > span { display: flex; align-items: center; border-right: 1px solid #d4d4d4; overflow: hidden; flex: none; }
.gc1 { width: 49px; } .gc2 { width: 40px; padding-left: 7px; } .gc3 { width: 88px; padding-left: 6px; }
.tri-sort2 { margin-left: 15px; border-left-width: 4.5px; border-right-width: 4.5px; border-top: 0; border-bottom: 5px solid #222; }
.grid-body { width: 177px; flex: 1; min-height: 0; overflow: hidden; border-right: 1px solid #e4e4e4; }
.grow { height: 20px; display: flex; border-bottom: 1px solid #ececec; }
.grow:nth-child(even) { background: #f9f9f9; }
.grow i { height: 100%; border-right: 1px solid #ececec; flex: none; }
.grow i:nth-child(1) { width: 49px; } .grow i:nth-child(2) { width: 40px; } .grow i:nth-child(3) { width: 87px; border-right: 0; }

.work { flex: 1; min-width: 0; display: flex; flex-direction: column; }
.work-top { height: 21px; flex: none; background: #fff; border-bottom: 2px solid #55a0ba; box-sizing: content-box; }
.viewport { flex: 1; min-height: 0; background: linear-gradient(#b3b4b6, #e8e9eb); }
.scene { display: block; width: 1436px; height: 763px; }
.axis { font: 400 12px "Liberation Sans", sans-serif; }
.axis-b { fill: #2a2ae8; }
.axis-w { fill: #d8d8d8; }
.wm-a { font: 700 37px "Liberation Sans", "Noto Sans CJK SC", sans-serif; fill: #f1f2f4; }
.wm-l { font-size: 46px; }
.wm-b { font: 700 13px "Liberation Sans", sans-serif; fill: #f1f2f4; }

/* dialog */
.dialog { position: absolute; left: 182px; top: 144px; width: 328px; height: 821px; background: #eee; display: flex; flex-direction: column; overflow: hidden; }
.dlg-title { height: 24px; flex: none; background: #55a0ba; display: flex; align-items: center; padding: 0 8px 0 7px; color: #eef7fa; }
.dlg-gear { width: 15px; height: 15px; flex: none; }
.dlg-name { margin-left: 7px; font-size: 14px; flex: 1; }
.dlg-act { width: 14px; height: 14px; flex: none; }
.dlg-close { margin-left: 6px; }
.dlg-body { padding: 4px 6px 0; flex: 1; min-height: 0; }
.sec { background: #fff; border-bottom: 2px solid #ccc; margin-bottom: 3px; padding: 0 9px 7px; }
.sec-4 { padding-bottom: 8px; }
.sec-h { height: 26px; padding-bottom: 2px; display: flex; align-items: center; justify-content: space-between; margin: 0 -2px; font-size: 14px; color: #0a7ea8; }
.sec-h-en { font-size: 15px; }
.chev { width: 8px; height: 8px; border-left: 2px solid #0b6a8a; border-top: 2px solid #0b6a8a; transform: rotate(45deg); margin: 4px 1px 0 0; flex: none; }
.chev-s { width: 7px; height: 7px; margin-right: 3px; }
.frow { margin-top: 4px; display: flex; align-items: center; gap: 2px; }
.frow-2 { margin-top: 2px; }
.frow-sb { justify-content: space-between; }
.frow > span:first-child, .sub-row > span { padding-bottom: 2px; }
.sel-on { width: 264px; height: 32px; background: #fedd78; display: flex; align-items: center; padding: 0 0 2px 2px; flex: none; }
.sel-check { width: 13px; height: 13px; margin-right: 5px; flex: none; }
.btn { width: 32px; height: 32px; padding: 0; background: #fff; border: 1px solid #a8a8a8; display: flex; align-items: center; justify-content: center; flex: none; }
.btn svg { width: 26px; height: 26px; display: block; }
.btn-on { background: #fedd78; border: 0; position: relative; }
.btn-on::after { content: ""; position: absolute; left: 3px; top: 3px; right: 3px; bottom: 3px; border: 1px dotted #000; }
.btn-s { width: 24px; height: 24px; }
.btn-s svg { width: 18px; height: 18px; }
.btn-24 { width: 24px; height: 24px; }
.btn-24 svg { width: 20px; height: 20px; }
.btns { display: flex; align-items: center; gap: 2px; }
.sub { margin-top: 2px; height: 237px; border: 1px solid #ccc; background: #eee; padding: 0 8px; }
.sub-h { height: 24px; padding-bottom: 2px; display: flex; align-items: center; justify-content: space-between; font-size: 12px; color: #0a7ea8; margin-right: -1px; }
.sub-row { margin-top: 5px; display: flex; align-items: center; justify-content: space-between; }
.sub-row-2 { margin-top: 2px; }
.listbox { margin-top: 2px; height: 139px; border: 1px solid #ccc; background: #fff; padding: 0 8px; }
.list-h { height: 22px; padding-bottom: 2px; display: flex; align-items: center; justify-content: space-between; font-size: 12px; color: #0a7ea8; margin-right: -1px; }
.list-wrap { margin-top: 7px; display: flex; gap: 2px; align-items: flex-start; }
.ltable { width: 236px; height: 100px; flex: none; border: 1px solid #d0d0d0; padding: 1px; overflow: hidden; }
.lrow { height: 20px; display: grid; grid-template-columns: 31px 1fr; border-bottom: 1px solid #ececec; }
.lrow:nth-child(even) { background: #f8f8f8; }
.lrow span { border-right: 1px solid #ececec; line-height: 19px; padding-left: 3px; }
.lrow-head { background: #8cc3d3; border-bottom: 0; }
.lrow-head span { border-right: 1px solid #fff; }
.btn-x svg { width: 18px; height: 18px; }
.frow-sel { height: 26px; }
.dlg-sel { width: 141px; height: 26px; padding: 0 6px 0 5px; flex: none; }
.no { width: 16px; height: 16px; margin-right: 4px; flex: none; }
.chk-row { margin-top: 5px; height: 20px; padding-bottom: 2px; display: flex; align-items: center; }
.chk { width: 12px; height: 12px; border: 1px solid #8a8a8a; background: linear-gradient(135deg, #ddd, #f6f6f6); margin-right: 6px; flex: none; box-shadow: inset 0 0 0 1px #fff; }
.prev { display: flex; align-items: center; }
.red-arrow { position: absolute; left: 330px; top: 876px; width: 36px; height: 36px; }
```
